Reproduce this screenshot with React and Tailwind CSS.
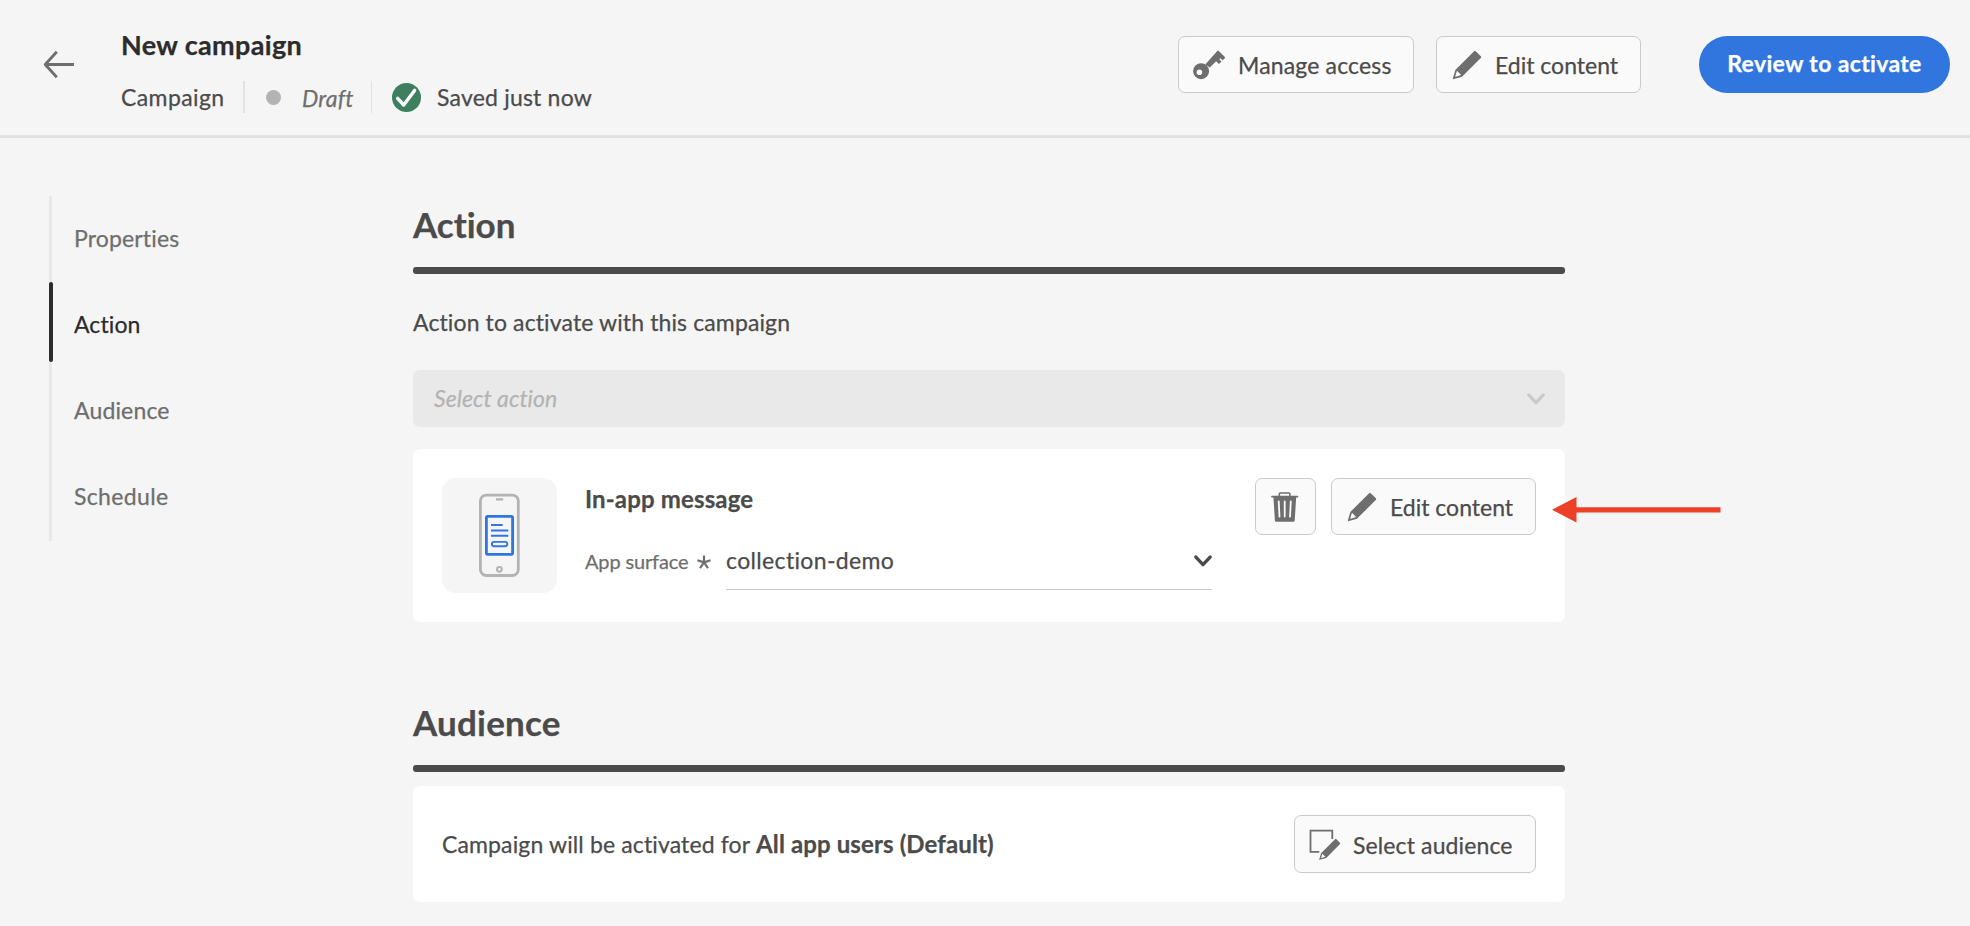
import React from "react";

const PENCIL =
  "M33.567 8.2L27.8 2.432a1.215 1.215 0 0 0-.866-.353H26.9a1.371 1.371 0 0 0-.927.406L5.084 23.372a.99.99 0 0 0-.251.422L2.055 33.1c-.114.377.459.851.783.851a.251.251 0 0 0 .062-.007c.276-.063 7.866-2.344 9.311-2.778a.972.972 0 0 0 .414-.249l20.888-20.889a1.372 1.372 0 0 0 .4-.883 1.221 1.221 0 0 0-.346-.945zM11.4 29.316c-2.161.649-4.862 1.465-6.729 2.022l2.009-6.73z";

function EditIcon() {
  return (
    <svg viewBox="0 0 36 36" className="size-8 shrink-0 fill-[#6e6e6e]">
      <path d={PENCIL} />
    </svg>
  );
}

function KeyIcon() {
  return (
    <svg viewBox="0 0 32 32" className="size-8 shrink-0 overflow-visible fill-[#6e6e6e]">
      <path d="M12.2 15.6 24.3 1.9a1 1 0 0 1 1.5 0l6 6.2a.8.8 0 0 1 0 1.1l-2.2 2.1-2.2-2.1-1.1 1.1 2.2 2.4-2.6 2.4-2.7-2.9-6.4 6.4z" />
      <path
        fillRule="evenodd"
        d="M8.1 14.2a8 8 0 1 0 0 16a8 8 0 1 0 0-16zM6.4 20.5a2.8 2.8 0 1 1 0 5.6a2.8 2.8 0 1 1 0-5.6z"
      />
    </svg>
  );
}

function TrashIcon() {
  return (
    <svg viewBox="0 0 32 32" className="size-8 shrink-0" fill="none" stroke="#6e6e6e">
      <path d="M10.3 5V3a1 1 0 0 1 1-1h8.6a1 1 0 0 1 1 1v2" strokeWidth="1.6" />
      <path d="M3 5.6h25.4" strokeWidth="1.8" strokeLinecap="round" />
      <path d="M4.4 6h22.8l-1.5 23.4a1.4 1.4 0 0 1-1.4 1.4H7.3a1.4 1.4 0 0 1-1.4-1.4z" fill="#6e6e6e" stroke="none" />
      <path d="M9.7 10.4l.8 15.2M15.7 10.4v15.2M21.8 10.4l-.8 15.2" stroke="#fafafa" strokeWidth="1.8" strokeLinecap="round" />
    </svg>
  );
}

function SelectAudienceIcon() {
  return (
    <svg viewBox="0 0 33 33" className="size-[33px] shrink-0">
      <path d="M24.3 11V2.6H2.5v21.2h8.8" fill="none" stroke="#6e6e6e" strokeWidth="1.8" />
      <path d={PENCIL} fill="#6e6e6e" transform="translate(9.9 9.5) scale(.66)" />
    </svg>
  );
}

function Chevron({ className }) {
  return (
    <svg viewBox="0 0 18 12" className={"h-3 w-[18px] shrink-0 " + className} fill="none" stroke="currentColor" strokeWidth="3.4" strokeLinecap="round" strokeLinejoin="round">
      <path d="M1.9 2.1 9 9.6l7.1-7.5" />
    </svg>
  );
}

function Asterisk() {
  return (
    <svg viewBox="0 0 14 14" className="size-3.5 shrink-0" stroke="#6e6e6e" strokeWidth="2.2">
      <path d="M7 7.4V.4M7 7.4.4 5.2M7 7.4l6.6-2.2M7 7.4l-4 5.8M7 7.4l4 5.8" />
    </svg>
  );
}

function PhoneIllustration() {
  return (
    <svg viewBox="0 0 115 115" className="size-[115px] shrink-0 rounded-[14px] bg-[#f5f5f5]" fill="none">
      <rect x="38.4" y="17.1" width="37.9" height="80.4" rx="6" stroke="#b3b3b3" strokeWidth="2.8" />
      <path d="M54 21.4h7.2" stroke="#b3b3b3" strokeWidth="2.2" />
      <circle cx="57.4" cy="91.3" r="2.4" stroke="#b3b3b3" strokeWidth="2" />
      <rect x="44.4" y="38.4" width="26.2" height="37.9" rx="1.2" stroke="#2f76e0" strokeWidth="2.8" />
      <path d="M49 47h11.7M49 52.4h17.3M49 57.8h17.3" stroke="#2f76e0" strokeWidth="2" />
      <rect x="49.9" y="63.9" width="15.4" height="4.4" rx="2.2" stroke="#2f76e0" strokeWidth="1.9" />
    </svg>
  );
}

function Button({ icon, children, className }) {
  return (
    <button className={"flex shrink-0 items-center rounded-[7px] border border-[#cacaca] bg-[#fafafa] whitespace-nowrap " + className}>
      {icon}
      <span className="pt-px">{children}</span>
    </button>
  );
}

function SectionTitle({ children, className }) {
  return (
    <>
      <h2 className={"text-[35px]/[42px] font-bold " + className}>{children}</h2>
      <div className="mt-[22px] h-[7px] rounded-[3px] bg-[#4b4b4b]" />
    </>
  );
}

const steps = [
  ["Properties", "tracking-[0.15px]"],
  ["Action", "tracking-[0.1px]"],
  ["Audience", "tracking-[0.15px]"],
  ["Schedule", "tracking-[0.35px]"],
];

export default function App() {
  return (
    <div className="h-[926px] w-[1970px] overflow-hidden bg-[#f5f5f5] font-['Lato','Open_Sans',sans-serif] text-[23px]/[28px] text-[#4b4b4b] [-webkit-text-stroke:0.25px] [font-variant-ligatures:none]">
      <header className="flex h-[138px] items-start border-b-[3px] border-[#e1e1e1] pr-5">
        <svg viewBox="0 0 32 30" className="mt-[50px] ml-[43px] h-[30px] w-8 shrink-0" fill="none" stroke="#6e6e6e" strokeWidth="2.8" strokeLinejoin="round">
          <path d="M13.8 1.8 2.2 14.5l11.6 12.7M2.2 14.5H31" />
        </svg>
        <div className="ml-[46px] flex flex-col">
          <h1 className="mt-[28px] text-[27px]/[34px] font-bold tracking-[0.35px] text-[#2c2c2c]">New campaign</h1>
          <div className="mt-[19px] flex h-8 items-center whitespace-nowrap">
            <span className="w-[103px] tracking-[0.4px]">Campaign</span>
            <div className="ml-[19px] h-8 w-0.5 bg-[#e1e1e1]" />
            <div className="ml-[21px] size-[15px] rounded-full bg-[#b3b3b3]" />
            <span className="ml-[21px] w-[51px] pt-px tracking-[0.2px] text-[#6e6e6e] italic">Draft</span>
            <div className="ml-[18px] h-8 w-px bg-[#e1e1e1]" />
            <svg viewBox="0 0 29 29" className="ml-5 size-[29px]" fill="none">
              <circle cx="14.5" cy="14.5" r="14.5" fill="#3d7f5f" />
              <path d="M5.6 15.4 11.7 22 22.6 7.4" stroke="#fff" strokeWidth="3.4" strokeLinecap="round" strokeLinejoin="round" />
            </svg>
            <span className="ml-4 tracking-[0.2px]">Saved just now</span>
          </div>
        </div>
        <div className="mt-9 ml-auto flex">
          <Button icon={<KeyIcon />} className="h-[57px] w-[236px] gap-[13px] pl-[14px] tracking-[0.15px]">Manage access</Button>
          <Button icon={<EditIcon />} className="ml-[22px] h-[57px] w-[205px] gap-3 pl-[14px]">Edit content</Button>
          <button className="ml-[58px] flex h-[57px] w-[251px] items-center justify-center rounded-full bg-[#3175df] pb-1 font-bold tracking-[0.35px] whitespace-nowrap text-white">
            Review to activate
          </button>
        </div>
      </header>

      <div className="flex">
        <nav className="mt-[58px] ml-[49px] h-[345px] w-[364px] shrink-0">
          <ul className="flex h-full w-[220px] flex-col border-l-[3px] border-[#e8e8e8]">
            {steps.map(([label, tracking]) => (
              <li key={label} className={"-ml-[3px] flex flex-1 items-start " + (label === "Action" ? "text-[#2c2c2c]" : "text-[#6e6e6e]")}>
                <span className={"h-20 w-1 rounded-sm " + (label === "Action" ? "bg-[#2c2c2c]" : "")} />
                <span className={"mt-[27.5px] ml-[21px] " + tracking}>{label}</span>
              </li>
            ))}
          </ul>
        </nav>

        <main className="w-[1152px] shrink-0">
          <section className="pt-[65px]">
            <SectionTitle className="tracking-[0px]">Action</SectionTitle>
            <p className="mt-[34px] tracking-[0.12px]">Action to activate with this campaign</p>
            <div className="mt-[34px] flex h-[57px] items-center justify-between rounded-[7px] bg-[#e9e9e9] pr-5 pl-[21px]">
              <span className="pb-0.5 tracking-[0.05px] text-[#b3b3b3] italic">Select action</span>
              <Chevron className="text-[#cacaca]" />
            </div>
            <div className="mt-[22px] flex h-[173px] rounded-[7px] bg-white p-[29px]">
              <PhoneIllustration />
              <div className="ml-[28px] flex w-[627px] flex-col">
                <h3 className="mt-[6px] text-[24px]/[30px] font-bold tracking-[0.15px]">In-app message</h3>
                <div className="mt-[19px] flex h-[57px] items-center">
                  <span className="w-[112px] pb-0.5 text-[20px] tracking-[-0.15px] text-[#6e6e6e]">App surface</span>
                  <Asterisk />
                  <div className="ml-[15px] flex h-full flex-1 items-center justify-between border-b border-[#c6c6c6]">
                    <span className="pb-0.5 tracking-[0.35px]">collection-demo</span>
                    <Chevron className="text-[#4b4b4b]" />
                  </div>
                </div>
              </div>
              <div className="relative ml-auto flex gap-[15px]">
                <button className="flex h-[57px] w-[61px] items-center justify-center rounded-[7px] border border-[#cacaca] bg-[#fafafa] pr-px">
                  <TrashIcon />
                </button>
                <Button icon={<EditIcon />} className="h-[57px] w-[205px] gap-3 pl-[14px]">Edit content</Button>
                <svg viewBox="0 0 170 26" className="absolute top-[19px] left-[297px] h-[26px] w-[170px] fill-[#ec4027]">
                  <path d="M0 12.7 24.5 0v10.2H168.5v5.3H24.5V25.5z" />
                </svg>
              </div>
            </div>
          </section>

          <section className="pt-[79px]">
            <SectionTitle className="tracking-[0.2px]">Audience</SectionTitle>
            <div className="mt-[14px] flex h-[116px] items-center justify-between rounded-[7px] bg-white px-[29px]">
              <p className="whitespace-nowrap">
                <span className="tracking-[0.13px]">Campaign will be activated for</span> <b className="text-[24px] tracking-[0.12px]">All app users (Default)</b>
              </p>
              <Button icon={<SelectAudienceIcon />} className="h-[58px] w-[242px] gap-3 pl-[13px] tracking-[0.12px]">Select audience</Button>
            </div>
          </section>
        </main>
      </div>
    </div>
  );
}
